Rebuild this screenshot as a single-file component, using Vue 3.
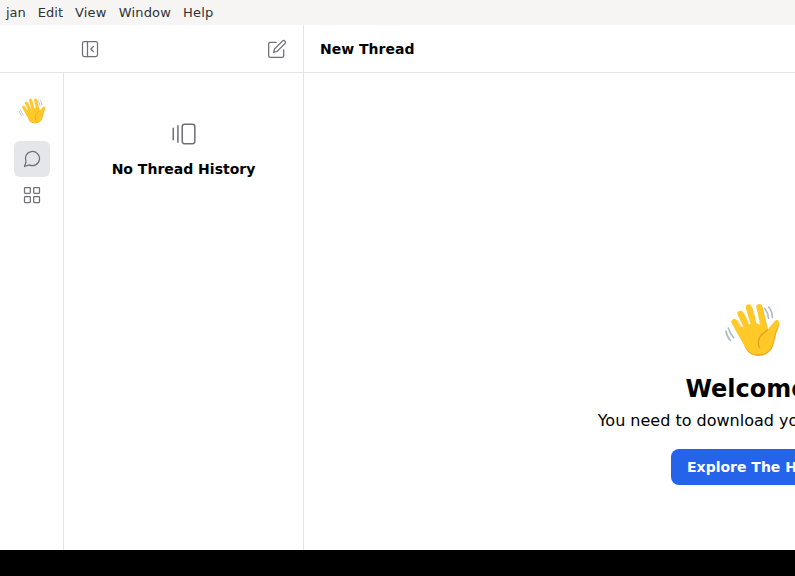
<script setup>
const menus = ['jan', 'Edit', 'View', 'Window', 'Help']
</script>

<template>
  <div class="screen">
    <svg class="defs" aria-hidden="true">
      <defs>
        <symbol id="wave" viewBox="25 37 174 168">
          <path fill="#f0a91f" d="M88 166C93 178 97 185 104 190C120 203 148 201 163 187C178 173 178 157 183 138C187 121 194 112 194 99L170 128Z" />
          <g fill="none" stroke="#ffc928" stroke-width="18" stroke-linecap="round">
            <path d="M59 97L88 148M77 72L106 132M102 53L122 120M134 52L149 120" />
          </g>
          <path fill="#ffc928" d="M66 119C80 154 91 175 104 186C119 199 147 197 161 184C174 171 175 155 180 136C184 119 192 110 193 98C192 89 183 89 178 97L158 121L153 104L137 106L127 101L116 104L103 104L95 110L81 111Z" />
          <path d="M69 93L79 111M87 70L100 97M112 54L121 86M143 54L159 119" fill="none" stroke="#f3b526" stroke-width="2" stroke-linecap="round" />
          <path d="M158 121C150 132 136 132 132 151Q130 164 134 173" fill="none" stroke="#e9a11b" stroke-width="4" stroke-linecap="round" />
          <g fill="none" stroke="#b0bec5" stroke-width="5" stroke-linecap="round">
            <path d="M150 56Q160 69 162 86M162 52Q174 66 173 84M41 115Q46 132 57 144M34 124Q37 142 47 152" />
          </g>
        </symbol>
      </defs>
    </svg>

    <nav class="menubar">
      <span v-for="menu in menus" :key="menu">{{ menu }}</span>
    </nav>

    <div class="window">
      <header class="topbar">
        <div class="tools">
          <svg class="icon" width="20" height="20" viewBox="0 0 24 24"><rect x="3" y="3" width="18" height="18" rx="2" /><path d="M9 3v18M16 15l-3-3 3-3" /></svg>
          <svg class="icon" width="20" height="20" viewBox="0 0 24 24"><path d="M11 4H4a2 2 0 0 0-2 2v14a2 2 0 0 0 2 2h14a2 2 0 0 0 2-2v-7" /><path d="M18.5 2.5a2.121 2.121 0 0 1 3 3L12 15l-4 1 1-4 9.5-9.5z" /></svg>
        </div>
        <h1>New Thread</h1>
      </header>

      <div class="body">
        <aside class="rail">
          <svg class="logo" width="28" height="28"><use href="#wave" /></svg>
          <button class="rail-button active"><svg class="icon" width="20" height="20" viewBox="0 0 24 24"><path d="m3 21 1.9-5.7a8.5 8.5 0 1 1 3.8 3.8z" /></svg></button>
          <button class="rail-button"><svg class="icon" width="20" height="20" viewBox="0 0 24 24"><rect x="3" y="3" width="7" height="7" rx="1" /><rect x="14" y="3" width="7" height="7" rx="1" /><rect x="3" y="14" width="7" height="7" rx="1" /><rect x="14" y="14" width="7" height="7" rx="1" /></svg></button>
        </aside>
        <section class="threads">
          <svg class="icon history" width="28" height="28" viewBox="0 0 24 24"><path d="M2.8 7v10M6.8 5v14" /><rect x="10.5" y="3.6" width="10.8" height="16.7" rx="2" /></svg>
          <h2>No Thread History</h2>
        </section>
        <main class="main">
          <svg class="hero" width="58" height="56"><use href="#wave" /></svg>
          <h2>Welcome!</h2>
          <p>You need to download your first model</p>
          <button class="explore">Explore The Hub</button>
        </main>
      </div>
    </div>
  </div>
</template>

<style>
body { margin: 0; overflow: hidden; background: #000; }
</style>

<style scoped>
* { box-sizing: border-box; }
.screen {
  width: 100vw;
  height: 576px;
  overflow: hidden;
  background: #000;
  font-family: "DejaVu Sans", sans-serif;
  color: #000;
}
.defs { display: block; width: 0; height: 0; }
.menubar {
  display: flex;
  gap: 12px;
  height: 25px;
  padding-left: 6px;
  line-height: 25px;
  font-size: 13px;
  color: #2e3436;
  background: #f6f5f4;
}
.menubar span:nth-child(n + 3) { letter-spacing: 0.19px; }
.window { width: 1200px; height: 525px; background: #fff; display: flex; flex-direction: column; }
.topbar { display: flex; height: 48px; border-bottom: 1px solid #e4e4e4; }
.tools {
  width: 304px;
  padding: 0 16px 0 80px;
  display: flex;
  align-items: center;
  justify-content: space-between;
  border-right: 1px solid #e4e4e4;
}
h1, h2, p { margin: 0; }
.topbar h1 { padding-left: 16px; font-size: 14px; line-height: 48px; }
.icon {
  display: block;
  fill: none;
  stroke: #6f6f78;
  stroke-width: 1.5;
  stroke-linecap: round;
  stroke-linejoin: round;
}
.history { stroke-width: 1.3; }
.body { display: flex; flex: 1; }
.rail {
  width: 64px;
  padding: 24px 0 0 14px;
  border-right: 1px solid #e4e4e4;
}
.logo { display: block; margin: 0 0 16px 4px; }
.rail-button {
  display: flex;
  align-items: center;
  justify-content: center;
  width: 36px;
  height: 36px;
  padding: 0;
  border: 0;
  border-radius: 6px;
  background: none;
}
.rail-button.active { background: #e5e6ea; }
.threads {
  width: 240px;
  padding-top: 47px;
  display: flex;
  flex-direction: column;
  align-items: center;
  border-right: 1px solid #e4e4e4;
}
.threads h2 { margin-top: 11px; font-size: 14px; line-height: 20px; }
.main {
  width: 896px;
  padding-top: 229px;
  display: flex;
  flex-direction: column;
  align-items: center;
}
.main h2 { margin-top: 15px; font-size: 24px; line-height: 32px; }
.main p { margin-top: 4px; font-size: 16px; line-height: 24px; }
.explore {
  height: 36px;
  margin-top: 16px;
  padding: 0 16px;
  border: 0;
  border-radius: 8px;
  background: #2563eb;
  color: #fff;
  font: bold 14px "DejaVu Sans", sans-serif;
}
</style>
